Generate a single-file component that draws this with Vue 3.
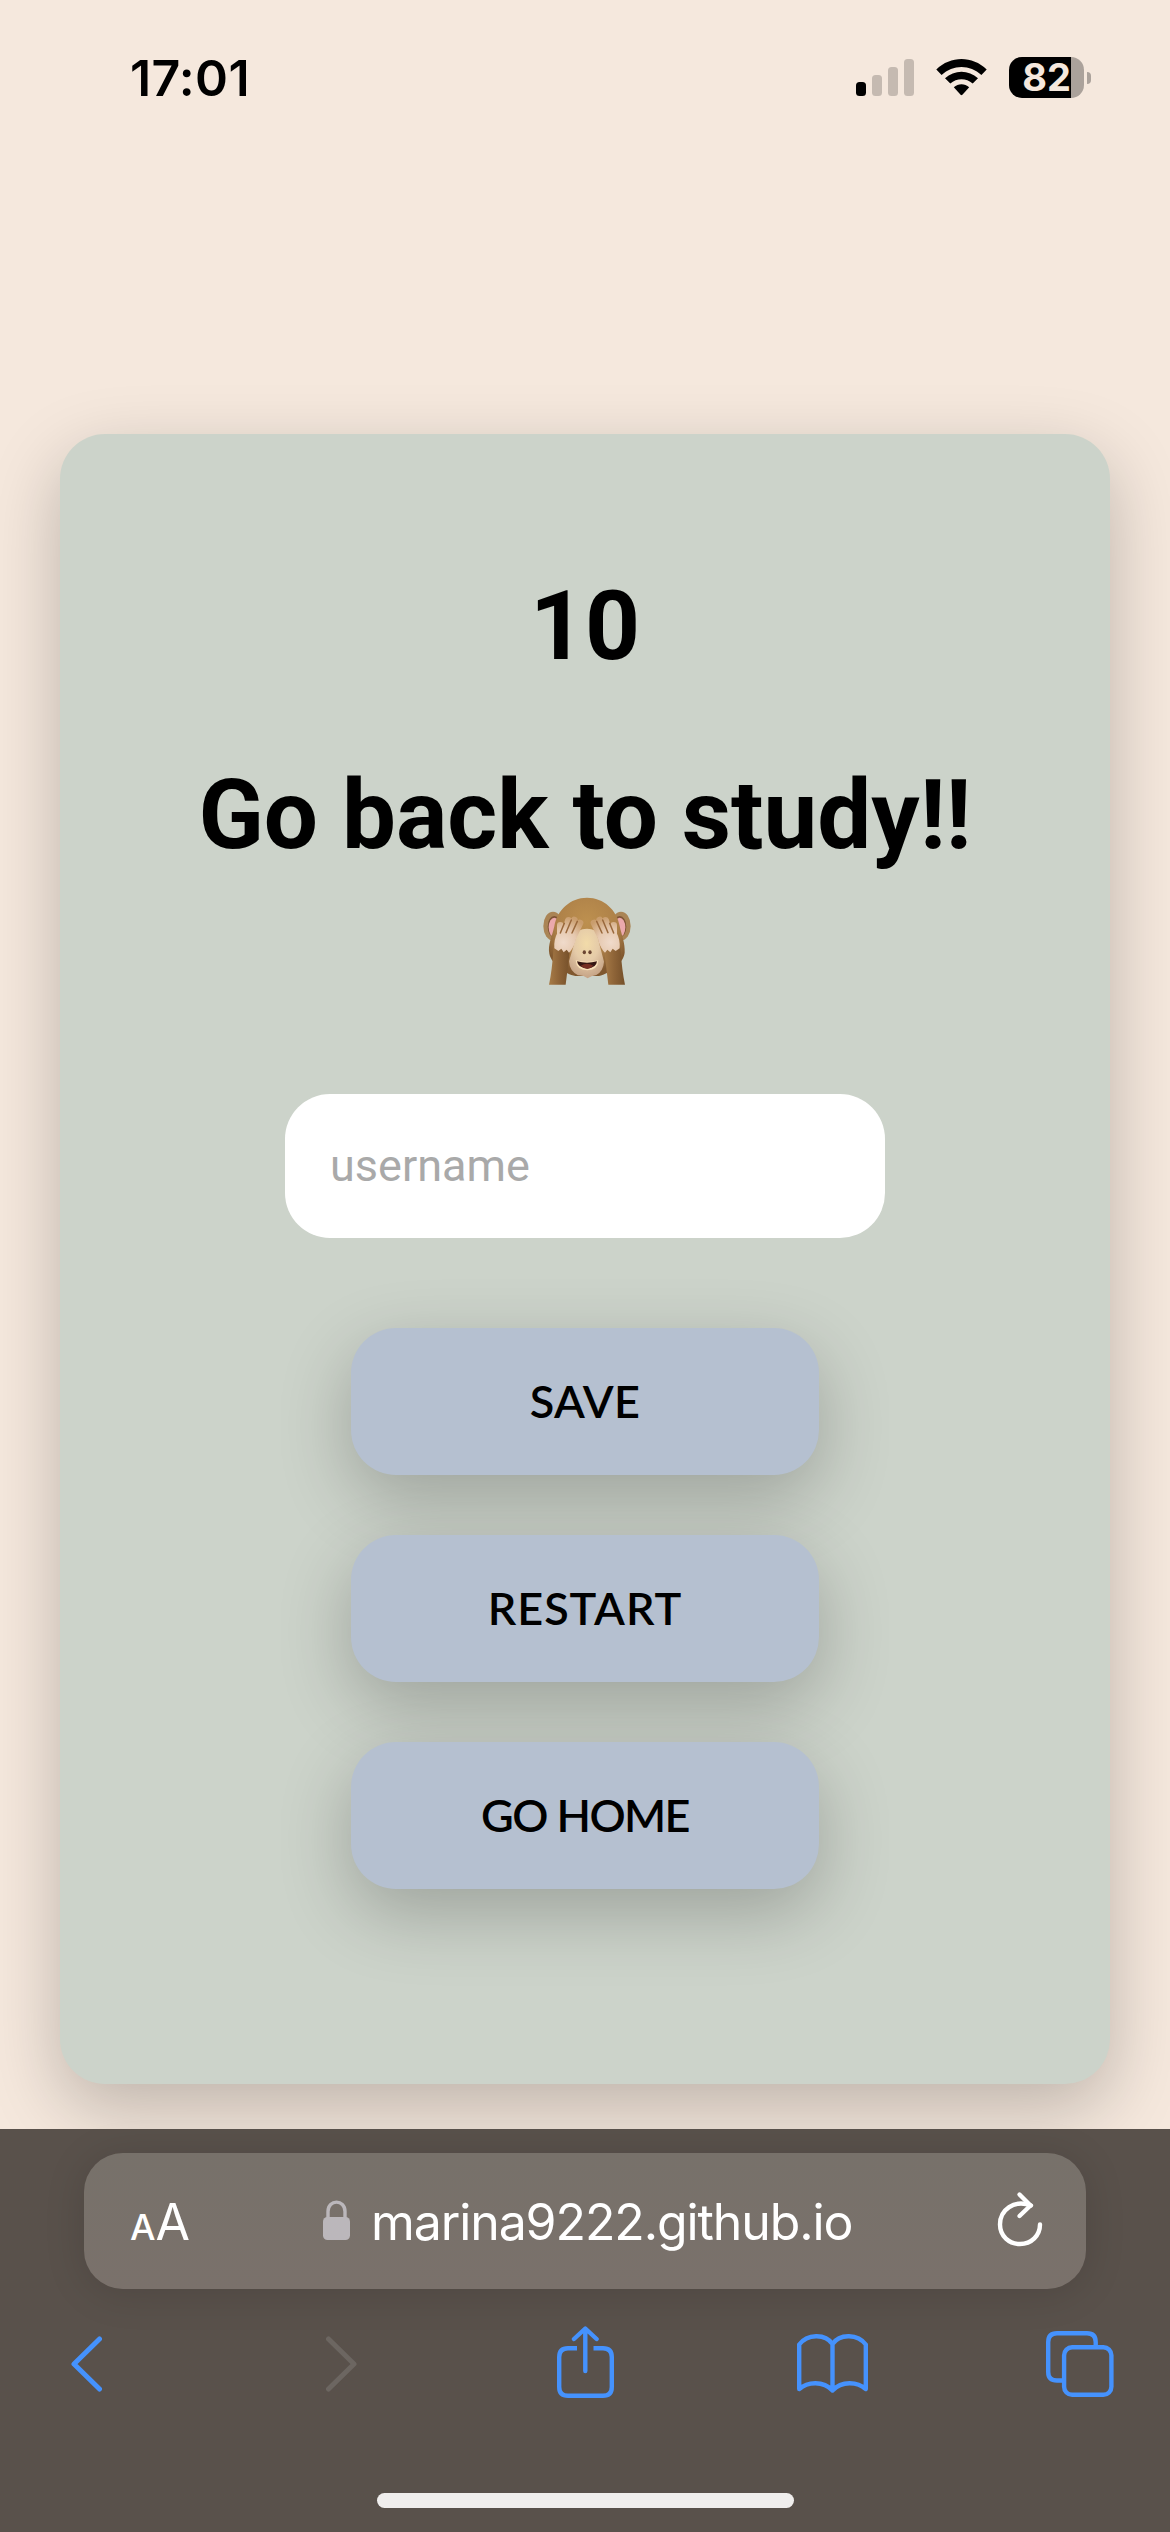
<script setup>
const score = 10
const actions = ['SAVE', 'RESTART', 'GO HOME']
const bars = [
  { h: 14, on: true },
  { h: 21, on: false },
  { h: 29, on: false },
  { h: 37, on: false }
]
</script>

<template>
  <div class="screen">
    <main class="page">
      <header class="status">
        <span class="time">17:01</span>
        <div class="signal">
          <i v-for="b in bars" :key="b.h" :class="{ on: b.on }" :style="{ height: b.h + 'px' }"></i>
        </div>
        <svg class="wifi" viewBox="0 0 51 37" width="51" height="37">
          <path d="M0.3 10.6 C14.5 -3.4 36.5 -3.4 50.7 10.6 L45.4 15.9 C34.2 5.2 16.8 5.2 5.6 15.9 Z" />
          <path d="M9 19.3 C18.3 10.5 32.7 10.5 42 19.3 L36.7 24.6 C30.3 18.7 20.7 18.7 14.3 24.6 Z" />
          <path d="M17.8 28.2 C22.3 24.2 28.7 24.2 33.2 28.2 L26.4 35.8 Q25.5 36.7 24.6 35.8 Z" />
        </svg>
        <div class="battery"><span>82</span></div>
        <i class="nub"></i>
      </header>

      <section class="card">
        <h1>{{ score }}</h1>
        <h1 class="message">Go back to study!!</h1>
        <svg class="monkey" viewBox="69 52 264 264" width="88" height="88">
          <defs>
            <radialGradient id="fur" cx=".5" cy=".3" r=".65">
              <stop offset="0" stop-color="#bd904f" />
              <stop offset=".65" stop-color="#ad8048" />
              <stop offset="1" stop-color="#80582f" />
            </radialGradient>
            <radialGradient id="face" cx=".5" cy=".3" r=".7">
              <stop offset="0" stop-color="#f2dba9" />
              <stop offset=".5" stop-color="#e5cba8" />
              <stop offset="1" stop-color="#c5a386" />
            </radialGradient>
            <linearGradient id="arm" x1="0" x2="1">
              <stop offset="0" stop-color="#a77b47" />
              <stop offset=".5" stop-color="#8d6337" />
              <stop offset="1" stop-color="#75502a" />
            </linearGradient>
            <radialGradient id="hand" gradientUnits="userSpaceOnUse" cx="130" cy="188" r="78">
              <stop offset="0" stop-color="#f0dbcb" />
              <stop offset=".5" stop-color="#e6c9b0" />
              <stop offset="1" stop-color="#c99d6d" />
            </radialGradient>
          </defs>
          <ellipse cx="99" cy="139" rx="29" ry="43" fill="#aa8455" />
          <ellipse cx="303" cy="139" rx="29" ry="43" fill="#aa8455" />
          <ellipse cx="103" cy="141" rx="20" ry="32" fill="#7e5335" />
          <ellipse cx="299" cy="141" rx="20" ry="32" fill="#7e5335" />
          <ellipse cx="103" cy="143" rx="17" ry="29" fill="#eba9ac" />
          <ellipse cx="299" cy="143" rx="17" ry="29" fill="#eba9ac" />
          <path d="M201 54 C151 54 111 91 103 140 C96 171 83 196 88 222 C94 253 137 283 166 289 L237 289 C270 281 310 251 314 219 C316 191 304 164 299 139 C291 91 251 54 201 54Z" fill="url(#fur)" />
          <path d="M174 154 Q201 140 228 154 L252 246 Q250 274 229 286 Q213 288 203 296 Q190 286 174 287 Q149 275 147 245Z" fill="url(#face)" />
          <ellipse cx="193" cy="218" rx="5" ry="6" fill="#6b4633" />
          <ellipse cx="210" cy="218" rx="5" ry="6" fill="#6b4633" />
          <path d="M167 242 Q201 250 235 242 Q234 271 202 272 Q169 271 167 242Z" fill="#fae1b8" />
          <path d="M171 245 Q201 253 231 245 Q229 265 202 267 Q174 265 171 245Z" fill="#351713" />
          <path d="M182 258 Q201 247 220 258 Q212 267 202 267 Q191 267 182 258Z" fill="#762f22" />
          <path d="M101 203 L150 208 L137 315 H87 Q96 275 101 203Z" fill="url(#arm)" />
          <path d="M301 203 L252 208 L265 315 H315 Q306 275 301 203Z" fill="url(#arm)" />
          <g v-for="side in 2" :key="side" :transform="side === 2 ? 'translate(402 0) scale(-1 1)' : undefined">
            <path d="M103 206 Q101 180 112 160 L166 160 L167 184 Q158 210 147 219 L140 210 L131 218 L124 207 L115 214Z" fill="url(#hand)" />
            <path d="M121 137 L121 172 M145 122 L130 176 M163 121 L138 180 M180 130 L152 188" fill="none" stroke="url(#hand)" stroke-width="20" stroke-linecap="round" />
            <path d="M133 131 L121 160 M154 121 L138 159 M172 125 L156 160" fill="none" stroke="#99683c" stroke-width="4.500" stroke-linecap="round" />
          </g>
        </svg>
        <input class="name" type="text" placeholder="username" />
        <button v-for="a in actions" :key="a" :class="'b' + a.length + (a.includes(' ') ? 'w' : '')">{{ a }}</button>
      </section>
    </main>

    <footer class="chrome">
      <div class="address">
        <span class="aa"><small>A</small><span>A</span></span>
        <svg class="lock" viewBox="0 0 27 40" width="27" height="40">
          <path d="M5 19 V11.5 C5 -1 22 -1 22 11.5 V19" fill="none" stroke="#bbb7bb" stroke-width="3.4" />
          <rect y="17" width="27" height="23" rx="4.5" fill="#bbb7bb" />
        </svg>
        <span class="url">marina9222.github.io</span>
        <svg class="reload" viewBox="996 2190 48 58" width="48" height="58">
          <path d="M1031 2205.5 C1014 2199 1000 2210 1000 2224.5 C1000 2236 1009 2244 1020 2244 C1031.500 2244 1040 2235.500 1040 2224.500" />
          <path d="M1019.5 2194.500 L1030.500 2205.500 L1019.500 2216" />
        </svg>
      </div>
      <nav class="tools">
        <svg viewBox="71 2326 31 73" width="31" height="73"><path d="M99.500 2339 L74 2364 L99.500 2389" stroke-width="5" /></svg>
        <svg class="off" viewBox="326 2326 31 73" width="31" height="73"><path d="M328.500 2339 L354 2364 L328.500 2389" stroke-width="5" /></svg>
        <svg viewBox="557 2326 58 73" width="58" height="73">
          <path d="M577 2348.200 H568 Q559.200 2348.200 559.200 2357 V2387 Q559.200 2395.800 568 2395.800 H603 Q611.800 2395.800 611.800 2387 V2357 Q611.800 2348.200 603 2348.200 H593.500" stroke-linecap="butt" />
          <path d="M585.300 2371 V2329 M574 2339 L585.300 2328.500 L596.600 2339" />
        </svg>
        <svg viewBox="797 2326 71 73" width="71" height="73">
          <path d="M832.500 2344 C825 2333 807 2334 799.200 2344.500 V2389 C807 2382 823 2380 832.500 2390.500 C842 2380 858 2382 865.800 2389 V2344.500 C858 2334 840 2333 832.500 2344 V2390" />
        </svg>
        <svg viewBox="1046 2326 68 73" width="68" height="73">
          <path d="M1062 2380.500 H1057 Q1048.200 2380.500 1048.200 2372 V2342 Q1048.200 2333.200 1057 2333.200 H1087 Q1095.700 2333.200 1095.700 2342 V2346" stroke-linecap="butt" />
          <rect x="1064.100" y="2347.300" width="47.300" height="47.500" rx="8" />
        </svg>
      </nav>
      <div class="home"></div>
    </footer>
  </div>
</template>

<style>
html, body { margin: 0; background: #f5e8dd; }
</style>

<style scoped>
.screen {
  width: 1170px;
  height: 2532px;
  display: flex;
  flex-direction: column;
  overflow: hidden;
  background: #f5e8dd;
  font-family: Roboto, sans-serif;
  color: #000;
}
.page { height: 2129px; overflow: hidden; flex: none; }
.status {
  height: 434px;
  box-sizing: border-box;
  padding: 57px 0 0 130px;
  display: flex;
  align-items: flex-start;
}
.time {
  width: 726px;
  font: 600 50px/42px Inter, sans-serif;
  letter-spacing: .3px;
}
.signal { display: flex; align-items: flex-end; gap: 6px; height: 39px; }
.signal i { width: 10px; border-radius: 3.5px; background: #c5bab1; }
.signal i.on { background: #000; }
.wifi { margin: 2px 0 0 22px; }
.battery {
  width: 75px;
  height: 41px;
  margin-left: 22px;
  border-radius: 13px;
  background: linear-gradient(90deg, #000 62px, #aba29b 62px);
  text-align: center;
  font: 700 38px/41px Inter, sans-serif;
  color: #f5e8dd;
}
.nub { width: 4px; height: 12px; margin: 15px 0 0 3px; border-radius: 0 4px 4px 0; background: #aba29b; }
.card {
  box-sizing: border-box;
  height: 1650px;
  margin: 0 60px;
  padding-top: 136px;
  border-radius: 45px;
  background: #ccd3ca;
  box-shadow: 0 24px 72px rgba(0, 0, 0, .23);
  display: flex;
  flex-direction: column;
  align-items: center;
}
h1 { margin: 0; font: 700 96px/112px Roboto, sans-serif; }
.message { margin-top: 77px; white-space: nowrap; }
.monkey { margin: 26px 0 0 3px; flex: none; }
.name {
  box-sizing: border-box;
  width: 600px;
  height: 144px;
  margin: 109px 0 30px;
  padding: 0 45px 2px;
  border: 0;
  border-radius: 45px;
  background: #fff;
  font: 400 45px Roboto, sans-serif;
  flex: none;
}
.name::placeholder { color: #a9a9a9; opacity: 1; }
button {
  width: 468px;
  height: 147px;
  margin-top: 60px;
  padding: 0;
  border: 0;
  border-radius: 45px;
  background: #b5c0d0;
  box-shadow: 0 24px 72px rgba(0, 0, 0, .23);
  color: #000;
  font: 600 45px/147px Lato, sans-serif;
  flex: none;
}
.b4 { letter-spacing: .3px; }
.b7 { letter-spacing: .9px; }
.b7w { letter-spacing: -1.6px; }
.chrome {
  height: 403px;
  box-sizing: border-box;
  padding-top: 24px;
  background: #59514b;
}
.address {
  box-sizing: border-box;
  height: 136px;
  margin: 0 84px;
  padding-left: 46px;
  border-radius: 39px;
  background: linear-gradient(#77716a, #7a716b);
  box-shadow: 0 4px 40px rgba(0, 0, 0, .13);
  display: flex;
  align-items: flex-start;
  color: #fff;
  font-family: Inter, sans-serif;
}
.aa { width: 193px; font-size: 50px; line-height: 138px; letter-spacing: -1px; }
.aa small { font-size: 36px; font-weight: 500; margin-right: 1px; }
.lock { margin-top: 47px; }
.url { margin-left: 21px; width: 625px; font-size: 50px; line-height: 138px; letter-spacing: -1.1px; white-space: nowrap; }
.reload { margin-top: 37px; fill: none; stroke: #fff; stroke-width: 4.4; stroke-linecap: round; stroke-linejoin: round; }
.tools {
  margin: 37px 0 0 71px;
  display: grid;
  grid-template-columns: 255px 231px 240px 249px 68px;
}
.tools svg { fill: none; stroke: #4592fd; stroke-width: 4.4; stroke-linecap: round; stroke-linejoin: round; }
.tools .off { stroke: #6c6661; }
.home { width: 417px; height: 15px; margin: 94px auto 0; border-radius: 8px; background: #f0eeed; }
</style>
